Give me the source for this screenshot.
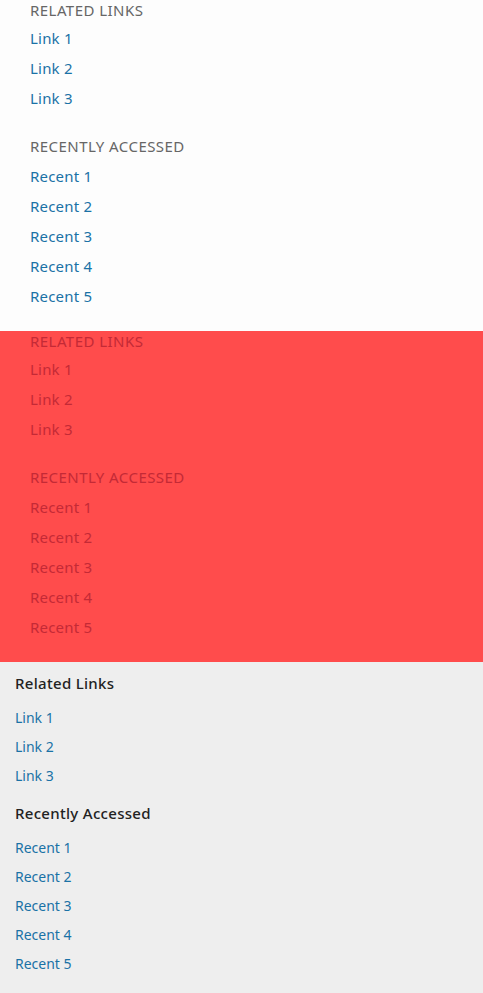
const related = ["Link 1", "Link 2", "Link 3"];
const recent = ["Recent 1", "Recent 2", "Recent 3", "Recent 4", "Recent 5"];

const font = { fontFamily: "'Noto Sans', 'Open Sans', sans-serif" };

const UpperPanel = ({ variant }: { variant: "plain" | "red" }) => {
  const bg = variant === "red" ? "bg-[#ff4c4c]" : "bg-[#fdfdfd]";
  const head = variant === "red" ? "text-[#c42a36]" : "text-[#666666]";
  const link = variant === "red" ? "text-[#c42a36]" : "text-[#1a72a6]";
  return (
    <div className={`${bg} h-[331px] px-[30px] text-[15px]`}>
      <div className={`${head} leading-[20px] uppercase tracking-[0.45px]`}>
        Related Links
      </div>
      <ul className="mt-[3px]">
        {related.map((l) => (
          <li key={l} className={`${link} leading-[30px] tracking-[0.2px]`}>
            {l}
          </li>
        ))}
      </ul>
      <div className={`${head} mt-[23px] leading-[20px] uppercase tracking-[0.45px]`}>
        Recently Accessed
      </div>
      <ul className="mt-[5px]">
        {recent.map((r) => (
          <li key={r} className={`${link} leading-[30px] tracking-[0.2px]`}>
            {r}
          </li>
        ))}
      </ul>
    </div>
  );
};

const App = () => {
  return (
    <div style={font} className="w-[483px]">
      <UpperPanel variant="plain" />
      <UpperPanel variant="red" />
      <div className="bg-[#eeeeee] h-[331px] px-[15px] pt-[11px]">
        <h3 className="text-[15px] font-medium text-[#222222] leading-[20px] tracking-[0.3px]">
          Related Links
        </h3>
        <ul className="mt-[10px] text-[14px]">
          {related.map((l) => (
            <li key={l} className="text-[#1a72a6] leading-[29px]">
              {l}
            </li>
          ))}
        </ul>
        <h3 className="mt-[13px] text-[15px] font-medium text-[#222222] leading-[20px] tracking-[0.3px]">
          Recently Accessed
        </h3>
        <ul className="mt-[10px] text-[14px]">
          {recent.map((r) => (
            <li key={r} className="text-[#1a72a6] leading-[29px]">
              {r}
            </li>
          ))}
        </ul>
      </div>
    </div>
  );
};

export default App;
